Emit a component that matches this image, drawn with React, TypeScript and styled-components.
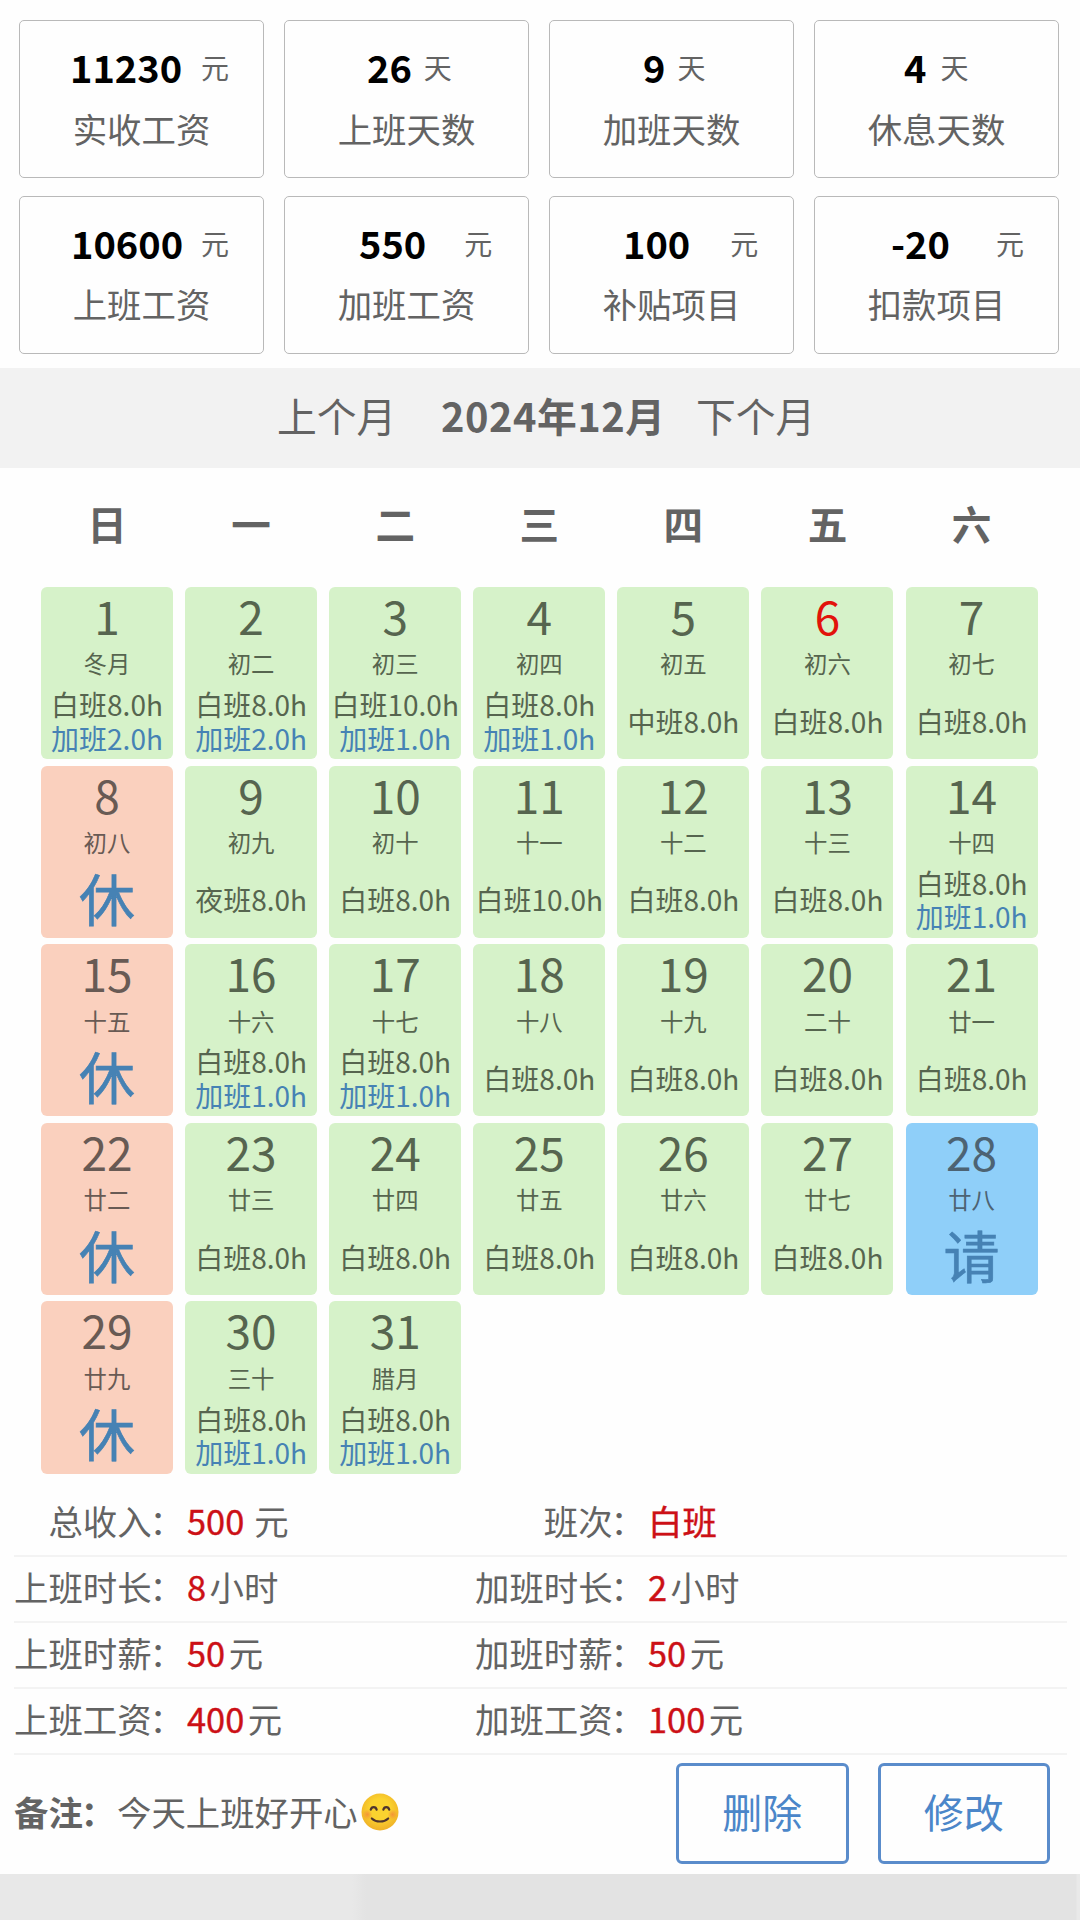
import React from "react";
import styled, { createGlobalStyle, css } from "styled-components";

const FONT = '"Noto Sans CJK SC", "Noto Sans", sans-serif';

const Global = createGlobalStyle`
  *, *::before, *::after { box-sizing: border-box; }
  body { margin: 0; background: #fefefe; font-family: ${FONT}; color: #636363; }
`;

const Page = styled.main`
  display: flex;
  flex-direction: column;
  width: 1080px;
  height: 1920px;
  overflow: hidden;
  background: #fefefe;
`;

const Stats = styled.section`
  flex: none;
  display: grid;
  grid-template-columns: repeat(4, 245px);
  grid-auto-rows: 158px;
  column-gap: 20px;
  row-gap: 17.5px;
  height: 368px;
  padding: 20px 0 0 19px;
`;

const StatCard = styled.div`
  display: flex;
  flex-direction: column;
  padding-top: 22px;
  border: 1px solid #b9b9b9;
  border-radius: 5px;
`;

const Figure = styled.div<{ $start: number; $gap: number }>`
  display: flex;
  align-items: center;
  gap: ${(p) => p.$gap}px;
  height: 48px;
  padding-left: ${(p) => p.$start}px;
  white-space: nowrap;
`;

const Amount = styled.strong`
  font-size: 38px;
  line-height: 48px;
  font-weight: 700;
  color: #000;
`;

const Unit = styled.span`
  font-size: 28px;
  line-height: 48px;
  height: 48px;
`;

const StatLabel = styled.div`
  margin-top: 12.5px;
  font-size: 34.4px;
  line-height: 48px;
  text-align: center;
`;

const MonthBar = styled.nav`
  flex: none;
  display: flex;
  align-items: center;
  height: 100px;
  padding: 0 0 6px 277px;
  background: #f2f2f2;
  font-size: 39.8px;
  line-height: 58px;
  white-space: nowrap;
`;

const MonthStep = styled.span`
  width: 164px;
`;

const MonthTitle = styled.strong`
  width: 255px;
  font-weight: 700;
  letter-spacing: 0.5px;
`;

const weekColumns = css`
  display: grid;
  grid-template-columns: repeat(7, 132px);
  column-gap: 12.1px;
  padding-left: 41px;
`;

const Weekdays = styled.div`
  ${weekColumns}
  flex: none;
  height: 119px;
  padding-top: 26px;
  font-size: 39.6px;
  line-height: 58px;
  font-weight: 700;
  text-align: center;
`;

const Calendar = styled.section`
  ${weekColumns}
  flex: none;
  grid-auto-rows: 172.2px;
  row-gap: 6.4px;
  height: 901px;
`;

type Kind = "work" | "rest" | "leave";

const cellColors: Record<Kind, { bg: string; fg: string }> = {
  work: { bg: "#d6f2c9", fg: "#56654f" },
  rest: { bg: "#fad0be", fg: "#685a54" },
  leave: { bg: "#8fcff9", fg: "#4d6373" },
};

const Cell = styled.div<{ $kind: Kind }>`
  display: flex;
  flex-direction: column;
  align-items: center;
  border-radius: 6px;
  background: ${(p) => cellColors[p.$kind].bg};
  color: ${(p) => cellColors[p.$kind].fg};
  white-space: nowrap;
`;

const DayNumber = styled.div<{ $today?: boolean }>`
  height: 59.5px;
  font-size: 46px;
  line-height: 57px;
  ${(p) => p.$today && "color: #e2130b;"}
`;

const Lunar = styled.div`
  height: 37.5px;
  font-size: 23.4px;
  line-height: 34px;
`;

const Shifts = styled.div`
  display: flex;
  flex-direction: column;
  justify-content: center;
  align-items: center;
  height: 75.5px;
`;

const Shift = styled.div<{ $extra?: boolean }>`
  font-size: 28px;
  line-height: 33.3px;
  ${(p) => p.$extra && "color: #4682b4;"}
`;

const Mark = styled.div`
  height: 75px;
  font-size: 56px;
  line-height: 68px;
  font-weight: 400;
  -webkit-text-stroke: 0.6px currentColor;
  color: #4682b4;
`;

const Details = styled.section`
  flex: none;
  display: flex;
  flex-direction: column;
  height: 267px;
  padding: 0 13px 0 14px;
`;

const DetailRow = styled.div`
  display: grid;
  grid-template-columns: 172px 288px 173px 1fr;
  height: 66.2px;
  padding-top: 3px;
  border-bottom: 2px solid #f3f3f3;
  font-size: 34.4px;
  line-height: 52px;
  white-space: nowrap;

  &:first-child { height: 69px; padding-top: 6px; }
`;

const DetailLabel = styled.span`
  display: flex;
  justify-content: flex-end;
`;

const Colon = styled.span`
  margin: 0 2px 0 -2px;
`;

const DetailValue = styled.span<{ $gap: number }>`
  display: flex;
  gap: ${(p) => p.$gap}px;
`;

const Red = styled.span`
  padding-left: 1px;
  color: #cc1016;
  font-weight: 400;
  -webkit-text-stroke: 0.4px currentColor;
`;

const Footer = styled.section`
  flex: none;
  display: flex;
  align-items: flex-start;
  height: 119px;
  padding: 8px 30px 0 14px;
`;

const Memo = styled.div`
  flex: 1;
  display: flex;
  align-items: center;
  height: 95px;
  font-size: 34.4px;
  line-height: 50px;
  white-space: nowrap;
`;

const MemoLabel = styled.strong`
  width: 103px;
  font-weight: 700;
`;

const Smile = styled.svg`
  flex: none;
  width: 38px;
  height: 38px;
  margin: 3px 0 0 3px;
`;

const Actions = styled.div`
  display: flex;
  gap: 29px;
`;

const ActionButton = styled.button`
  width: 172.5px;
  height: 101px;
  padding: 0 0 6px;
  border: 3px solid #5a8ccb;
  border-radius: 6px;
  background: transparent;
  color: #4b86c9;
  font: 400 40px/58px ${FONT};
`;

const BottomStrip = styled.div`
  flex: 1;
  background: linear-gradient(to right, #e8e8e8 352px, #e3e3e3 366px, #e3e3e3 1076px, #e9e9e9 1077px);
`;

const stats: [string, string, string, number, number][] = [
  ["11230", "元", "实收工资", 50, 19],
  ["26", "天", "上班天数", 82, 12],
  ["9", "天", "加班天数", 93, 12],
  ["4", "天", "休息天数", 89, 14],
  ["10600", "元", "上班工资", 51, 18],
  ["550", "元", "加班工资", 74, 38],
  ["100", "元", "补贴项目", 73, 40],
  ["-20", "元", "扣款项目", 76, 46],
];

const weekdays = ["日", "一", "二", "三", "四", "五", "六"];

const lunarDays = [
  "冬月", "初二", "初三", "初四", "初五", "初六", "初七", "初八", "初九", "初十", "十一",
  "十二", "十三", "十四", "十五", "十六", "十七", "十八", "十九", "二十", "廿一", "廿二",
  "廿三", "廿四", "廿五", "廿六", "廿七", "廿八", "廿九", "三十", "腊月",
];

const marks: Record<number, string> = { 8: "休", 15: "休", 22: "休", 28: "请", 29: "休" };
const shiftOverrides: Record<number, string> = {
  3: "白班10.0h", 5: "中班8.0h", 9: "夜班8.0h", 11: "白班10.0h",
};
const overtime: Record<number, string> = {
  1: "2.0", 2: "2.0", 3: "1.0", 4: "1.0", 14: "1.0", 16: "1.0", 17: "1.0", 30: "1.0", 31: "1.0",
};

type Entry = { label: string; value: string; unit?: string; gap?: number };
const details: [Entry, Entry][] = [
  [{ label: "总收入", value: "500", unit: "元", gap: 10 }, { label: "班次", value: "白班" }],
  [{ label: "上班时长", value: "8", unit: "小时" }, { label: "加班时长", value: "2", unit: "小时" }],
  [{ label: "上班时薪", value: "50", unit: "元" }, { label: "加班时薪", value: "50", unit: "元" }],
  [{ label: "上班工资", value: "400", unit: "元" }, { label: "加班工资", value: "100", unit: "元" }],
];

function Day({ day }: { day: number }) {
  const mark = marks[day];
  const kind: Kind = mark === "休" ? "rest" : mark ? "leave" : "work";
  return (
    <Cell $kind={kind}>
      <DayNumber $today={day === 6}>{day}</DayNumber>
      <Lunar>{lunarDays[day - 1]}</Lunar>
      <Shifts>
        {mark ? <Mark>{mark}</Mark> : <Shift>{shiftOverrides[day] ?? "白班8.0h"}</Shift>}
        {overtime[day] && <Shift $extra>{`加班${overtime[day]}h`}</Shift>}
      </Shifts>
    </Cell>
  );
}

function Detail({ label, value, unit, gap = 3.5 }: Entry) {
  return (
    <>
      <DetailLabel>
        {label}
        <Colon>：</Colon>
      </DetailLabel>
      <DetailValue $gap={gap}>
        <Red>{value}</Red>
        {unit && <span>{unit}</span>}
      </DetailValue>
    </>
  );
}

function SmileIcon() {
  return (
    <Smile viewBox="0 0 38 38" aria-label="微笑">
      <defs>
        <radialGradient id="face" cx="50%" cy="42%" r="55%">
          <stop offset="0.5" stopColor="#fbd32f" />
          <stop offset="1" stopColor="#f0b429" />
        </radialGradient>
        <radialGradient id="blush">
          <stop offset="0" stopColor="#f2843c" stopOpacity="0.75" />
          <stop offset="1" stopColor="#f2843c" stopOpacity="0" />
        </radialGradient>
      </defs>
      <circle cx="19" cy="19" r="18.5" fill="url(#face)" />
      <circle cx="6.5" cy="21.5" r="5" fill="url(#blush)" />
      <circle cx="31.5" cy="21.5" r="5" fill="url(#blush)" />
      <g fill="none" stroke="#4e342e" strokeLinecap="round">
        <path d="M9.8 16.6c.8-3.4 5-3.4 5.8 0M22.4 16.6c.8-3.4 5-3.4 5.8 0" strokeWidth="2.3" />
        <path d="M10.8 25.4c4.2 4.2 12.2 4.2 16.4 0" strokeWidth="2.1" />
      </g>
    </Smile>
  );
}

export default function App() {
  return (
    <>
      <Global />
      <Page>
        <Stats>
          {stats.map(([amount, unit, label, start, gap]) => (
            <StatCard key={label}>
              <Figure $start={start} $gap={gap}>
                <Amount>{amount}</Amount>
                <Unit>{unit}</Unit>
              </Figure>
              <StatLabel>{label}</StatLabel>
            </StatCard>
          ))}
        </Stats>
        <MonthBar>
          <MonthStep>上个月</MonthStep>
          <MonthTitle>2024年12月</MonthTitle>
          <MonthStep>下个月</MonthStep>
        </MonthBar>
        <Weekdays>
          {weekdays.map((d) => (
            <span key={d}>{d}</span>
          ))}
        </Weekdays>
        <Calendar>
          {lunarDays.map((_, i) => (
            <Day key={i} day={i + 1} />
          ))}
        </Calendar>
        <Details>
          {details.map(([left, right]) => (
            <DetailRow key={left.label}>
              <Detail {...left} />
              <Detail {...right} />
            </DetailRow>
          ))}
        </Details>
        <Footer>
          <Memo>
            <MemoLabel>
              备注<Colon>：</Colon>
            </MemoLabel>
            <span>今天上班好开心</span>
            <SmileIcon />
          </Memo>
          <Actions>
            <ActionButton>删除</ActionButton>
            <ActionButton>修改</ActionButton>
          </Actions>
        </Footer>
        <BottomStrip />
      </Page>
    </>
  );
}
